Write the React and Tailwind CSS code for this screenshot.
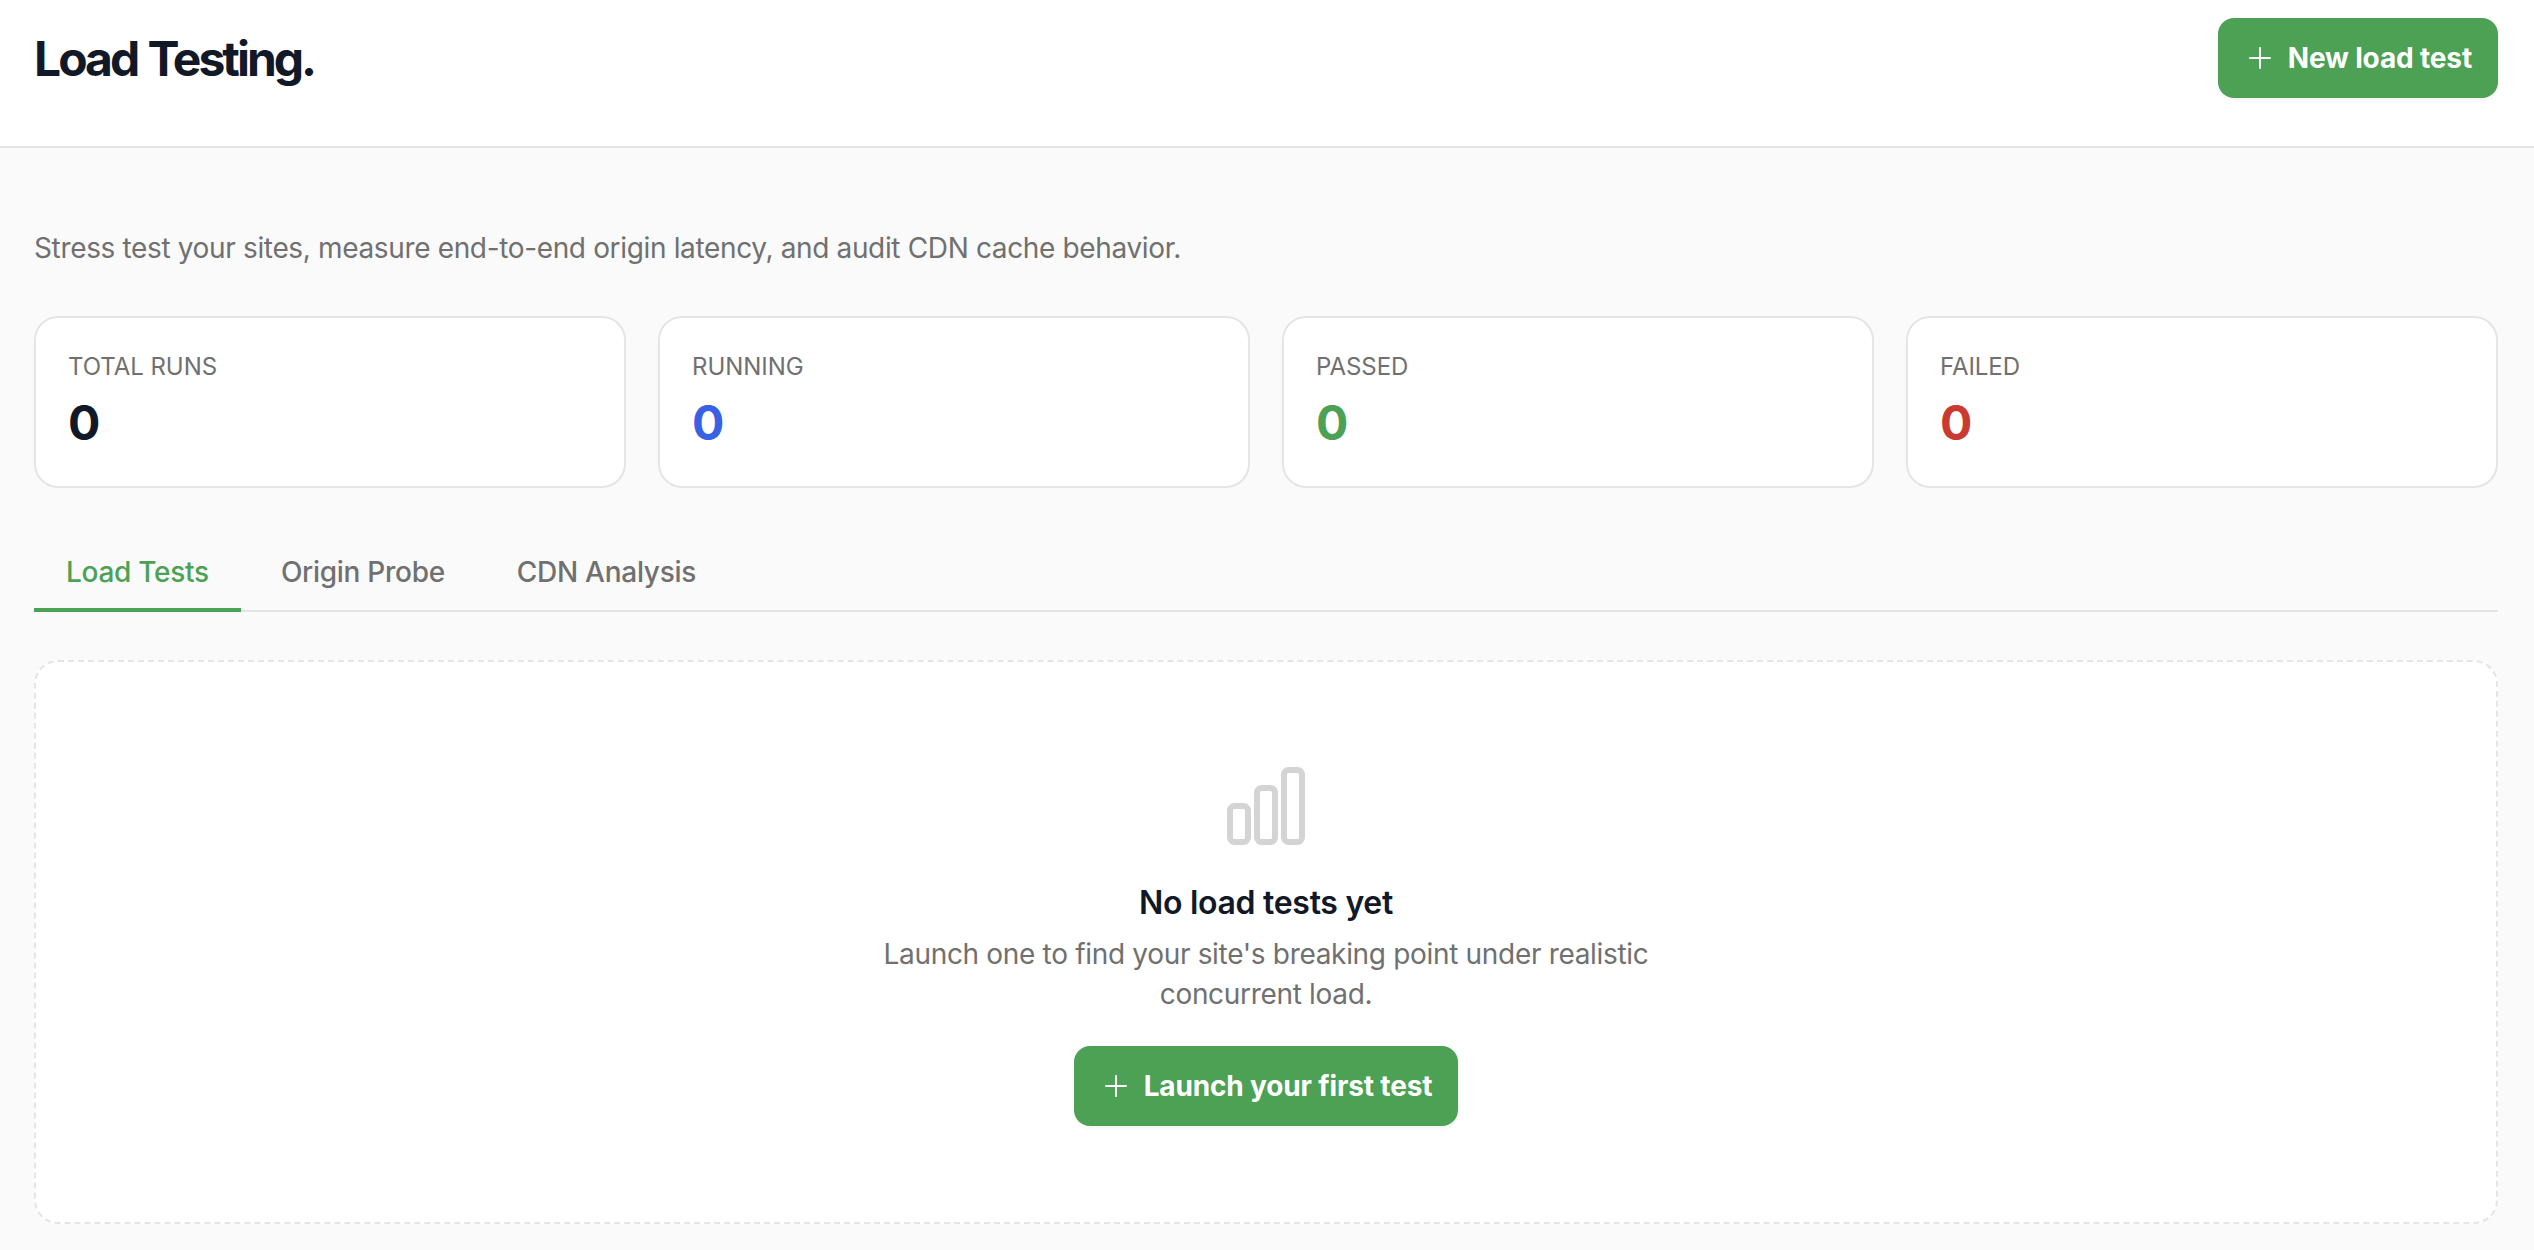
import React, { useState } from 'react';

const STATS = [
  { label: 'Total runs', value: 0, color: 'text-[#111827]' },
  { label: 'Running', value: 0, color: 'text-[#3961e5]' },
  { label: 'Passed', value: 0, color: 'text-[#4ca154]' },
  { label: 'Failed', value: 0, color: 'text-[#cb3a31]' },
];

const TABS = ['Load Tests', 'Origin Probe', 'CDN Analysis'];

const PlusIcon = () => (
  <svg width="32" height="32" viewBox="0 0 24 24" fill="none" stroke="currentColor" strokeWidth="1.5" strokeLinecap="round" strokeLinejoin="round">
    <path d="M12 4.5v15m7.5-7.5h-15" />
  </svg>
);

const BarsIcon = () => (
  <svg width="96" height="96" viewBox="0 0 24 24" fill="none" stroke="currentColor" strokeWidth="1.5" strokeLinecap="round" strokeLinejoin="round">
    <path d="M3 13.125C3 12.504 3.504 12 4.125 12h2.25c.621 0 1.125.504 1.125 1.125v6.75C7.5 20.496 6.996 21 6.375 21h-2.25A1.125 1.125 0 0 1 3 19.875v-6.75ZM9.75 8.625c0-.621.504-1.125 1.125-1.125h2.25c.621 0 1.125.504 1.125 1.125v11.25c0 .621-.504 1.125-1.125 1.125h-2.25a1.125 1.125 0 0 1-1.125-1.125V8.625ZM16.5 4.125c0-.621.504-1.125 1.125-1.125h2.25C20.496 3 21 3.504 21 4.125v15.75c0 .621-.504 1.125-1.125 1.125h-2.25a1.125 1.125 0 0 1-1.125-1.125V4.125Z" />
  </svg>
);

const ActionButton = ({ children }) => (
  <button className="flex h-20 items-center gap-3 rounded-[16px] bg-[#4ca154] px-[26px] text-[28px] font-bold tracking-[-0.15px] whitespace-nowrap text-white shadow-[0_2px_4px_rgba(0,0,0,0.05)]">
    <PlusIcon />
    {children}
  </button>
);

const App = () => {
  const [tab, setTab] = useState('Load Tests');

  return (
    <div className="h-[1250px] overflow-hidden bg-[#fafafa] font-[Inter,sans-serif] text-[#111827]">
      <header className="flex h-[148px] items-start justify-between border-b-2 border-[#e5e5e5] bg-white pt-[18px] pr-9 pl-[34px]">
        <h1 className="mt-[13px] text-[48px] leading-[56px] font-bold tracking-[-3px] [word-spacing:2px]">Load Testing.</h1>
        <ActionButton>New load test</ActionButton>
      </header>

      <main className="pt-[80px] pr-9 pl-[34px]">
        <p className="text-[28px] leading-[40px] tracking-[-0.35px] text-[#707070]">
          Stress test your sites, measure end-to-end origin latency, and audit CDN cache behavior.
        </p>

        <div className="mt-12 grid grid-cols-4 gap-8">
          {STATS.map(({ label, value, color }) => (
            <div key={label} className="h-[172px] rounded-[24px] border-2 border-[#e5e5e5] bg-white px-8 pt-[33px]">
              <div className="text-[24px] leading-[32px] tracking-[-0.05px] text-[#707070] uppercase">{label}</div>
              <div className={`mt-2 text-[48px] leading-[64px] font-bold ${color}`}>{value}</div>
            </div>
          ))}
        </div>

        <nav className="mt-12 flex h-[76px] border-b-2 border-[#e5e5e5]">
          {TABS.map((name) => (
            <button
              key={name}
              onClick={() => setTab(name)}
              className={`mr-2 h-[76px] border-b-4 px-8 text-[28px] font-medium tracking-[-0.28px] ${
                tab === name ? 'border-[#4ca154] text-[#4ca154]' : 'border-transparent text-[#707070]'
              }`}
            >
              {name}
            </button>
          ))}
        </nav>

        <section className="mt-12 flex h-[564px] flex-col items-center rounded-[24px] border-2 border-dashed border-[#e5e5e5] bg-white pt-24 text-center">
          <div className="text-[#d4d4d4]"><BarsIcon /></div>
          <h2 className="mt-[25px] text-[32px] leading-[48px] font-semibold tracking-[-0.3px]">No load tests yet</h2>
          <p className="mt-[7px] mb-8 w-[832px] text-[28px] leading-[40px] tracking-[-0.32px] text-[#707070]">
            Launch one to find your site's breaking point under realistic concurrent load.
          </p>
          <ActionButton>Launch your first test</ActionButton>
        </section>
      </main>
    </div>
  );
};

export default App;
